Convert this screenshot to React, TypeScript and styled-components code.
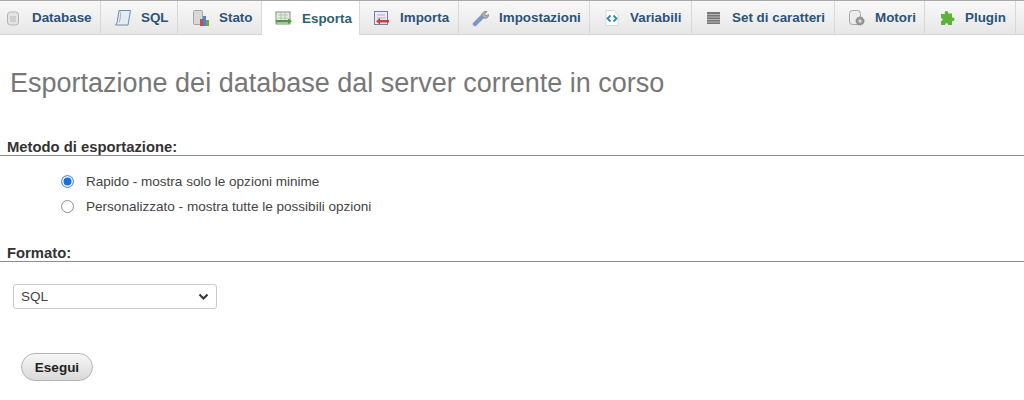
import * as React from 'react';
import styled, { createGlobalStyle } from 'styled-components';

const GlobalStyle = createGlobalStyle`
    html, body {
        margin: 0;
        padding: 0;
        background: #fff;
    }
    body {
        font-family: 'Liberation Sans', Arial, sans-serif;
        overflow: hidden;
    }
`;

const Page = styled.div`
    width: 1024px;
    height: 400px;
    overflow: hidden;
`;

const TabBar = styled.ul`
    display: flex;
    margin: 0;
    padding: 0;
    height: 35px;
    list-style: none;
    border-top: 1px solid #a9a9a9;
    border-bottom: 1px solid #d4d4d4;
    box-sizing: border-box;
    background: linear-gradient(#f8f8f8, #e7e7e7);
`;

const Tab = styled.li<{ $width: number; $pad: number; $active?: boolean }>`
    display: flex;
    align-items: center;
    box-sizing: border-box;
    flex: none;
    width: ${p => p.$width}px;
    height: ${p => (p.$active ? '34px' : '33px')};
    padding-left: ${p => p.$pad}px;
    gap: 9px;
    border-right: 1px solid #d8d8d8;
    background: ${p => (p.$active ? '#fff' : 'linear-gradient(#f8f8f8, #e7e7e7)')};
    color: ${p => (p.$active ? '#2f5f70' : '#2c5378')};
    font-size: 13.4px;
    font-weight: bold;
    white-space: nowrap;
`;

const TabIcon = styled.svg`
    flex: none;
    width: 18px;
    height: 18px;
`;

const Title = styled.h2`
    margin: 30px 0 0 10px;
    height: 36px;
    font-size: 27px;
    line-height: 36px;
    font-weight: normal;
    color: #777;
    white-space: nowrap;
`;

const Section = styled.section<{ $top: number }>`
    margin-top: ${p => p.$top}px;
`;

const SectionTitle = styled.h3`
    margin: 0;
    padding-left: 7px;
    height: 16px;
    font-size: 14.8px;
    line-height: 17px;
    font-weight: bold;
    color: #333;
    border-bottom: 1px solid #8c8c8c;
`;

const Options = styled.div`
    display: flex;
    flex-direction: column;
    gap: 7px;
    padding: 16px 0 0 61px;
`;

const Option = styled.label`
    display: flex;
    align-items: center;
    gap: 12px;
    height: 18px;
    font-size: 13.55px;
    color: #444;
`;

const Radio = styled.span<{ $checked?: boolean }>`
    box-sizing: border-box;
    width: 13px;
    height: 13px;
    border-radius: 50%;
    background: ${p => (p.$checked ? '#1a6fe0' : '#fff')};
    border: 1px solid ${p => (p.$checked ? '#5b9cf0' : '#8e8e8e')};
    box-shadow: ${p => (p.$checked ? 'inset 0 0 0 1.5px #fff' : 'none')};
`;

const SelectBox = styled.div`
    display: flex;
    align-items: center;
    justify-content: space-between;
    box-sizing: border-box;
    width: 204px;
    height: 25px;
    margin: 22px 0 0 13px;
    padding: 0 7px;
    border: 1px solid #c8c8c8;
    border-radius: 3px;
    background: #fff;
    font-size: 13.5px;
    color: #444;
`;

const Go = styled.button`
    display: block;
    box-sizing: border-box;
    width: 72px;
    height: 28px;
    margin: 44px 0 0 21px;
    padding: 0;
    border: 1px solid #b4b4b4;
    border-radius: 14px;
    background: linear-gradient(#f6f6f6, #d9d9d9);
    font-family: 'Liberation Sans', Arial, sans-serif;
    font-size: 13.5px;
    font-weight: bold;
    color: #222;
`;

const icons: Record<string, React.ReactNode> = {
    database: (
        <>
            <rect x="2.500" y="3" width="11" height="13" rx="3" fill="#e4e4e4" stroke="#b4b4b4" />
            <rect x="5" y="7" width="6" height="6" fill="#cfcfcf" />
        </>
    ),
    sql: (
        <>
            <path d="M5 1.500h11.500l-2.500 14.500H1.500l1.500-2z" fill="#e3ebf3" stroke="#6f8fa8" />
            <path d="M6 2.500c1 2 .5 8-1 11" fill="none" stroke="#9db4c6" />
        </>
    ),
    stato: (
        <>
            <rect x="1.500" y="1.500" width="9" height="14" rx="1" fill="#d8d8d8" stroke="#a5a5a5" />
            <rect x="8" y="10" width="3" height="7" fill="#c0504d" />
            <rect x="11" y="7" width="3" height="10" fill="#5a7fc0" />
            <rect x="14" y="11" width="3" height="6" fill="#6aa84f" />
        </>
    ),
    esporta: (
        <>
            <rect x="1" y="3" width="14" height="12" fill="#e8eee4" stroke="#7d8f78" />
            <path d="M3 6h10M3 9h10M6 4v8M10 4v8" stroke="#b5c4b0" />
            <rect x="1" y="11" width="13" height="2.500" fill="#4f9a3a" />
            <path d="M13 9.500l4 2.700-4 2.700z" fill="#4f9a3a" />
        </>
    ),
    importa: (
        <>
            <rect x="1.500" y="2.500" width="13" height="13" fill="#e7ebf2" stroke="#7a7f9c" />
            <path d="M4 6h8M4 9h8" stroke="#a9b2c4" />
            <rect x="5" y="11" width="11" height="2.500" fill="#d33b3b" />
            <path d="M7 9l-4 3.200 4 3.200z" fill="#d33b3b" />
        </>
    ),
    impostazioni: (
        <>
            <path d="M3 15l7.500-7.500" stroke="#7f98cc" strokeWidth="4.500" strokeLinecap="round" />
            <path d="M10 7.500c-1-3 1.500-5.500 5-5l-2.500 2.500 1.500 2 2.500-1.500c.5 3-3 5.500-6.500 2z" fill="#b0b0b0" stroke="#8a8a8a" />
        </>
    ),
    variabili: (
        <>
            <path d="M3 1.500h8l4 4v11H3z" fill="#fff" stroke="#d4d9e0" />
            <path d="M7.500 6.500L4.500 9.500l3 3M10.500 6.500l3 3-3 3" fill="none" stroke="#3b7fc4" strokeWidth="1.800" />
        </>
    ),
    charset: (
        <>
            <rect x="2" y="3" width="13" height="12" fill="#777" />
            <path d="M2 5.500h13M2 8h13M2 10.500h13M2 13h13" stroke="#b5b5b5" />
        </>
    ),
    motori: (
        <>
            <rect x="1.500" y="1.500" width="11" height="14" rx="3" fill="#ececec" stroke="#a8a8a8" />
            <circle cx="12" cy="12" r="4" fill="#9a9a9a" stroke="#7a7a7a" strokeDasharray="1.500 1" />
            <circle cx="12" cy="12" r="1.500" fill="#e4e4e4" />
        </>
    ),
    plugin: (
        <path d="M7 2.500c2-1.500 4 0 3 2h4v4c2-.5 3.500 1.500 2 3-1 .8-2 .5-2 .5v4h-4c.5-2-3-2.500-3 0H3v-4c2 .5 2.500-3 0-3V5h4c-.5-1-.5-2 0-2.500z" fill="#5bb33a" />
    ),
};

const tabs = [
    { label: 'Database', icon: 'database', width: 101, pad: 5 },
    { label: 'SQL', icon: 'sql', width: 77, pad: 13 },
    { label: 'Stato', icon: 'stato', width: 84, pad: 14 },
    { label: 'Esporta', icon: 'esporta', width: 98, pad: 13, active: true },
    { label: 'Importa', icon: 'importa', width: 99, pad: 13 },
    { label: 'Impostazioni', icon: 'impostazioni', width: 131, pad: 13 },
    { label: 'Variabili', icon: 'variabili', width: 102, pad: 13 },
    { label: 'Set di caratteri', icon: 'charset', width: 143, pad: 13 },
    { label: 'Motori', icon: 'motori', width: 90, pad: 13 },
    { label: 'Plugin', icon: 'plugin', width: 91, pad: 13 },
];

export default function App() {
    return (
        <Page>
            <GlobalStyle />
            <TabBar>
                {tabs.map(tab => (
                    <Tab key={tab.label} $width={tab.width} $pad={tab.pad} $active={tab.active}>
                        <TabIcon viewBox="0 0 18 18">{icons[tab.icon]}</TabIcon>
                        {tab.label}
                    </Tab>
                ))}
            </TabBar>
            <Title>Esportazione dei database dal server corrente in corso</Title>
            <Section $top={38}>
                <SectionTitle>Metodo di esportazione:</SectionTitle>
                <Options>
                    <Option>
                        <Radio $checked />
                        Rapido - mostra solo le opzioni minime
                    </Option>
                    <Option>
                        <Radio />
                        Personalizzato - mostra tutte le possibili opzioni
                    </Option>
                </Options>
            </Section>
            <Section $top={30}>
                <SectionTitle>Formato:</SectionTitle>
                <SelectBox>
                    SQL
                    <svg width="11" height="8" viewBox="0 0 11 8">
                        <path d="M1.500 1.500l4 4 4-4" fill="none" stroke="#333" strokeWidth="2" />
                    </svg>
                </SelectBox>
            </Section>
            <Go>Esegui</Go>
        </Page>
    );
}
